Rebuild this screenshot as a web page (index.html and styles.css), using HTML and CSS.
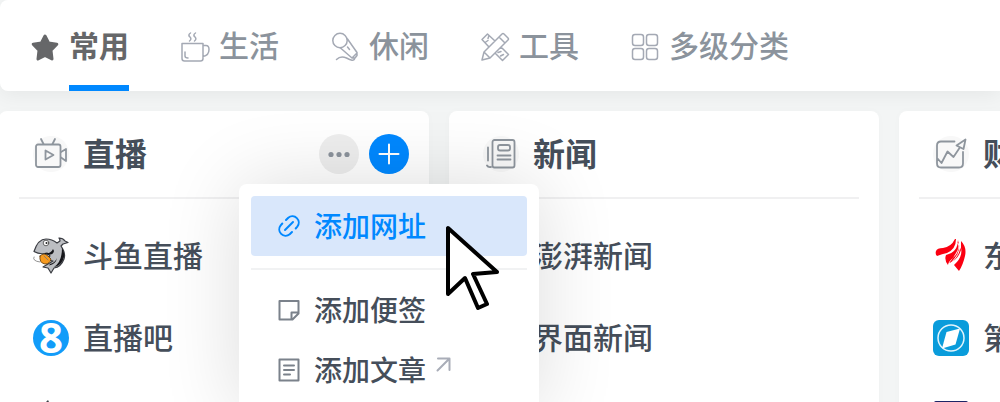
FILE: index.html
```html
<!DOCTYPE html>
<html lang="zh-CN">
<head>
    <meta charset="UTF-8">
    <meta name="viewport" content="width=device-width, initial-scale=1.0">
    <title>网址导航</title>
    <link rel="stylesheet" href="styles.css">
</head>
<body>
    <nav class="tabs">
        <a class="tab active" href="#common">
            <svg class="tab-icon star" viewBox="0 0 30 30"><path d="M15 4l3.600 7 8.200 1.200-5.800 6.100 1 8.700-7-3.500-7 3.500 1-8.700-5.800-6.100 8.200-1.200z"/></svg>
            <span class="tab-name">常用</span>
        </a>
        <a class="tab" href="#life">
            <svg class="tab-icon" viewBox="0 0 30 30"><path d="M2 11.500h21v15a2.500 2.500 0 0 1-2.500 2.500h-16a2.500 2.500 0 0 1-2.500-2.500zM23 13.500h3q3 0 3 4 0 6-6 7M5 20v4q0 2 3 2M10.500 1q-3 2-.5 4 2 2-.5 4M15.500 1q-3 2-.5 4 2 2-.5 4"/></svg>
            <span class="tab-name">生活</span>
        </a>
        <a class="tab" href="#leisure">
            <svg class="tab-icon" viewBox="0 0 30 30"><circle cx="10" cy="8.500" r="7.200"/><path d="M17.500 7l9.500 13.500v3l-2 2.500h-3L10.500 16M27 21l-5 5M17.500 15l2 2.500M6.500 27.500q4-4 10-1.500 7 4 8 1"/></svg>
            <span class="tab-name">休闲</span>
        </a>
        <a class="tab" href="#tools">
            <svg class="tab-icon" viewBox="0 0 30 30"><path d="M2 28l2-8L22 2q1-1 2 0l4 4q1 1 0 2L10 26zM4 20l6 6M19 5l6 6M9 15L2 7.500 7.500 2l7.500 7M5 10.500l3-2M9 3.500L8 6.500M21 15l7.500 7.500-6 6L15 21M18 20.500l3-1M20.500 24l3-1.500"/></svg>
            <span class="tab-name">工具</span>
        </a>
        <a class="tab" href="#more">
            <svg class="tab-icon" viewBox="0 0 30 30"><rect x="2.500" y="2.500" width="11" height="11" rx="2.500"/><rect x="16.500" y="2.500" width="11" height="11" rx="2.500"/><rect x="2.500" y="16.500" width="11" height="11" rx="2.500"/><rect x="16.500" y="16.500" width="11" height="11" rx="2.500"/></svg>
            <span class="tab-name">多级分类</span>
        </a>
    </nav>

    <main class="board">
        <section class="card">
            <header class="card-head">
                <svg class="card-icon" viewBox="0 0 36 36"><rect x="3" y="8.500" width="24.500" height="22.500" rx="2"/><path d="M8 3l2.500 5M22 3l-2.500 5M28 16l5-3v12l-5-3.500M12.500 14.500v9l8-4.500z"/></svg>
                <h2>直播</h2>
                <div class="actions">
                    <button class="btn-more" aria-label="更多">
                        <svg viewBox="0 0 40 40"><circle cx="12" cy="20.500" r="2.600"/><circle cx="20" cy="20.500" r="2.600"/><circle cx="28" cy="20.500" r="2.600"/></svg>
                    </button>
                    <div class="add">
                        <button class="btn-add" aria-label="添加">
                            <svg viewBox="0 0 40 40"><path d="M10.500 20h19M20 10.500v19"/></svg>
                        </button>
                        <div class="menu">
                            <button class="menu-item selected">
                                <svg class="menu-icon" viewBox="0 0 24 24"><path d="M9 6l2.300-2.300a6.400 6.400 0 0 1 9 9l-1.600 1.800M15 18l-2.300 2.300a6.400 6.400 0 0 1-9-9l1.600-1.800M8 16l8-8"/></svg>
                                <span>添加网址</span>
                                <svg class="cursor" viewBox="0 0 58 88"><path d="M4 4v66l17-16 13 30 9-4-14-30 24-2z"/></svg>
                            </button>
                            <hr>
                            <button class="menu-item">
                                <svg class="menu-icon" viewBox="0 0 24 24"><path d="M2.500 3h19v12.500l-6 6h-13zM21.500 14.500h-7v7"/></svg>
                                <span>添加便签</span>
                            </button>
                            <button class="menu-item">
                                <svg class="menu-icon" viewBox="0 0 24 24"><path d="M2.500 1.500h19v21h-19zM7 7.500h10M7 12h10M7 16.500h6"/></svg>
                                <span>添加文章</span>
                                <svg class="outlink" viewBox="0 0 16 16"><path d="M2.500 13.500L14 2M3 1.500h11.500V13"/></svg>
                            </button>
                        </div>
                    </div>
                </div>
            </header>
            <ul class="links">
                <li><a href="#douyu">
                    <svg class="site-icon" viewBox="0 0 36 36">
                        <path d="M1 13.500Q5 1 13 1q6 0 11 4l3-2q0-2-1-3 4 0 6 3l3 1.500-5 1.500-2 2q5 7 3 13-3 8-10 9l-3 5-3-5-5-1 5-3 5-3-9-2 6-3-3-3Q7 17 1 13.500z" fill="#bcbec2" stroke="#3a3c42" stroke-width="1.200"/>
                        <path d="M29 10q4 6 1 12-3 6-9 7 8-5 8-19zM12 15q6 1 8-4l1 2q-1 5-9 3.500zM17 26q5-1 7-6-1 6-8 7.500z" fill="#15161a"/>
                        <circle cx="13" cy="5" r="2.800" fill="#fff" stroke="#444" stroke-width=".8"/><circle cx="13.500" cy="5" r="1" fill="#222"/>
                        <path d="M7 18q4-4 8 0l3 3q-1 5-6 5-6-1-5-8z" fill="#f79a1e" stroke="#5a3a10" stroke-width=".8"/>
                        <path d="M11 18l4 4M1 19q-2 4 6 5" fill="none" stroke="#777" stroke-width=".8"/>
                    </svg>
                    <span>斗鱼直播</span>
                </a></li>
                <li><a href="#zhibo8">
                    <svg class="site-icon" viewBox="0 0 36 36"><circle cx="18" cy="18" r="18" fill="#129cf9"/><text class="eight" x="18" y="33" text-anchor="middle">8</text></svg>
                    <span>直播吧</span>
                </a></li>
                <li><a href="#site3" aria-label="直播">
                    <svg class="site-icon" viewBox="0 0 36 36"><path d="M13 0l2-2 8 17-9 6-7-8z" fill="#3a3d45"/></svg>
                </a></li>
            </ul>
        </section>

        <section class="card">
            <header class="card-head">
                <svg class="card-icon" viewBox="0 0 36 36"><rect x="9.500" y="4" width="22" height="27.500" rx="2"/><rect x="15" y="9" width="12" height="5.500" rx="2"/><path d="M14.500 19.500h13M14.500 23.500h13M5 11.500v13M4 29.500q1 2 4 1.500"/></svg>
                <h2>新闻</h2>
            </header>
            <ul class="links">
                <li><a href="#thepaper"><span class="site-icon"></span><span>澎湃新闻</span></a></li>
                <li><a href="#jiemian"><span class="site-icon"></span><span>界面新闻</span></a></li>
            </ul>
        </section>

        <section class="card">
            <header class="card-head">
                <svg class="card-icon" viewBox="0 0 36 36"><path d="M21.500 5.500H8q-4 0-4 4v18q0 4 4 4h18q4 0 4-4V16M4.500 22.500l4 4.500 6-11.500 6 5.500 6-9M23.500 9.500l9-6-2 9.500z"/></svg>
                <h2>财经</h2>
            </header>
            <ul class="links">
                <li><a href="#eastmoney">
                    <svg class="site-icon" viewBox="0 0 36 36"><path d="M3 13q1-3 7-3 8-1 12-9h1q0 10-9 14-5 1-10 3-2-2-1-5zM25 2q3 10-4 17-6 5-6 8-4-5-2-10Q25 14 25 2zM28 3q6 6 4 15-2 9-6 15l-5-6q9-8 7-17zM24 2q3 8-1 13-4 7-7 10 9-3 12-13z" fill="#fb0011"/><path d="M26.300 3q2 10-4 17-3 3-5 7" fill="none" stroke="#fff"/></svg>
                    <span>东方财富</span>
                </a></li>
                <li><a href="#yicai">
                    <svg class="site-icon" viewBox="0 0 36 36"><rect width="36" height="36" rx="6" fill="#0a9cdb"/><circle cx="18" cy="18" r="13" fill="none" stroke="#e2f4fc" stroke-width="1.500"/><path d="M13.500 12l13.500-3.500-4.500 16L9 28.500z" fill="#fff"/></svg>
                    <span>第一财经</span>
                </a></li>
                <li><a href="#site3" aria-label="财经">
                    <svg class="site-icon" viewBox="0 0 36 36"><rect x="1" y="-1" width="34" height="36" rx="2" fill="#1d2466"/></svg>
                </a></li>
            </ul>
        </section>
    </main>
</body>
</html>
```

FILE: styles.css
```css
* {
    box-sizing: border-box;
}
body {
    font-family: "Noto Sans CJK SC", sans-serif;
    font-weight: 500;
    background-color: #f3f5f5;
    color: #454e5a;
    margin: 0;
    height: 100vh;
    overflow: hidden;
}
a {
    color: inherit;
    text-decoration: none;
}
button {
    border: none;
    padding: 0;
    font-family: inherit;
    font-weight: inherit;
    cursor: pointer;
}
svg {
    display: block;
    flex: none;
    fill: none;
    overflow: visible;
    stroke-linecap: round;
    stroke-linejoin: round;
}

/* tabs */
.tabs {
    display: flex;
    gap: 51px;
    height: 91px;
    padding: 0 30px;
    background-color: #ffffff;
    border-radius: 8px 0 0 8px;
    box-shadow: 0 4px 20px rgba(0, 0, 0, 0.06);
}
.tab {
    display: flex;
    align-items: center;
    gap: 9px;
    color: #8b939c;
    font-size: 30px;
    white-space: nowrap;
}
.tab-icon {
    width: 30px;
    height: 30px;
    margin-top: 2px;
    stroke: #a4a9b4;
    stroke-width: 1.5;
}
.tab-name {
    height: 91px;
    line-height: 89px;
}
.active {
    color: #666769;
    font-weight: bold;
}
.active .tab-name {
    border-bottom: 6px solid #0088ff;
}
.star {
    fill: #666769;
    stroke: #666769;
    stroke-width: 3;
}

/* cards */
.board {
    display: grid;
    grid-template-columns: repeat(3, 43vw);
    gap: 20px;
    margin: 20px 0 0 -1px;
}
.card {
    background-color: #ffffff;
    border-radius: 8px;
    padding: 0 20px 20px;
    box-shadow: 0 0 8px rgba(0, 0, 0, 0.02);
}
.card-head {
    display: flex;
    align-items: center;
    gap: 14px;
    height: 88px;
    padding-left: 14px;
    border-bottom: 2px solid #f0f0f1;
}
.card-icon {
    width: 36px;
    height: 36px;
    border-radius: 50%;
    background-color: #f8f8f8;
    stroke: #8e959d;
    stroke-width: 1.8;
}
h2 {
    margin: 0;
    padding-bottom: 4px;
    font-size: 32px;
    line-height: 40px;
    white-space: nowrap;
}
.actions {
    display: flex;
    gap: 10px;
    margin-left: auto;
}
.btn-more,
.btn-add {
    display: block;
    width: 40px;
    height: 40px;
    border-radius: 50%;
}
.btn-more {
    background-color: #eeeeee;
}
.btn-more svg {
    fill: #8b929b;
}
.btn-add {
    background-color: #0088ff;
}
.btn-add svg {
    stroke: #ffffff;
    stroke-width: 2;
}
.links {
    list-style: none;
    margin: 0;
    padding: 16px 0 0 14px;
}
.links a {
    display: flex;
    align-items: center;
    gap: 14px;
    height: 82px;
    font-size: 30px;
    white-space: nowrap;
}
.links span {
    padding-bottom: 4px;
}
.site-icon {
    flex: none;
    width: 36px;
    height: 36px;
}
.eight {
    font: bold 42px "Open Sans", sans-serif;
    fill: #ffffff;
}

/* add menu */
.add {
    position: relative;
}
.menu {
    position: absolute;
    z-index: 10;
    top: 50px;
    left: -130px;
    width: 300px;
    padding: 12px;
    background-color: #ffffff;
    border-radius: 8px;
    box-shadow: 0 0 80px rgba(0, 0, 0, 0.14);
}
.menu hr {
    border: none;
    height: 2px;
    margin: 12px 0 10px;
    background-color: #f1f2f3;
}
.menu-item {
    position: relative;
    display: flex;
    align-items: center;
    gap: 13px;
    width: 100%;
    height: 60px;
    padding-left: 26px;
    border-radius: 4px;
    background-color: transparent;
    color: #454e5a;
    font-size: 28px;
    white-space: nowrap;
}
.menu-item span {
    padding-bottom: 2px;
}
.menu-icon {
    width: 24px;
    height: 24px;
    stroke: #7b828b;
    stroke-width: 2;
}
.selected {
    background-color: #d9e7fb;
    color: #0088ff;
}
.selected .menu-icon {
    stroke: #0088ff;
}
.outlink {
    width: 16px;
    height: 16px;
    margin: 0 0 10px -4px;
    stroke: #a9adb8;
    stroke-width: 2;
}
.cursor {
    position: absolute;
    top: 28px;
    left: 193px;
    width: 58px;
    height: 88px;
    fill: #ffffff;
    stroke: #000000;
    stroke-width: 4;
}
```
